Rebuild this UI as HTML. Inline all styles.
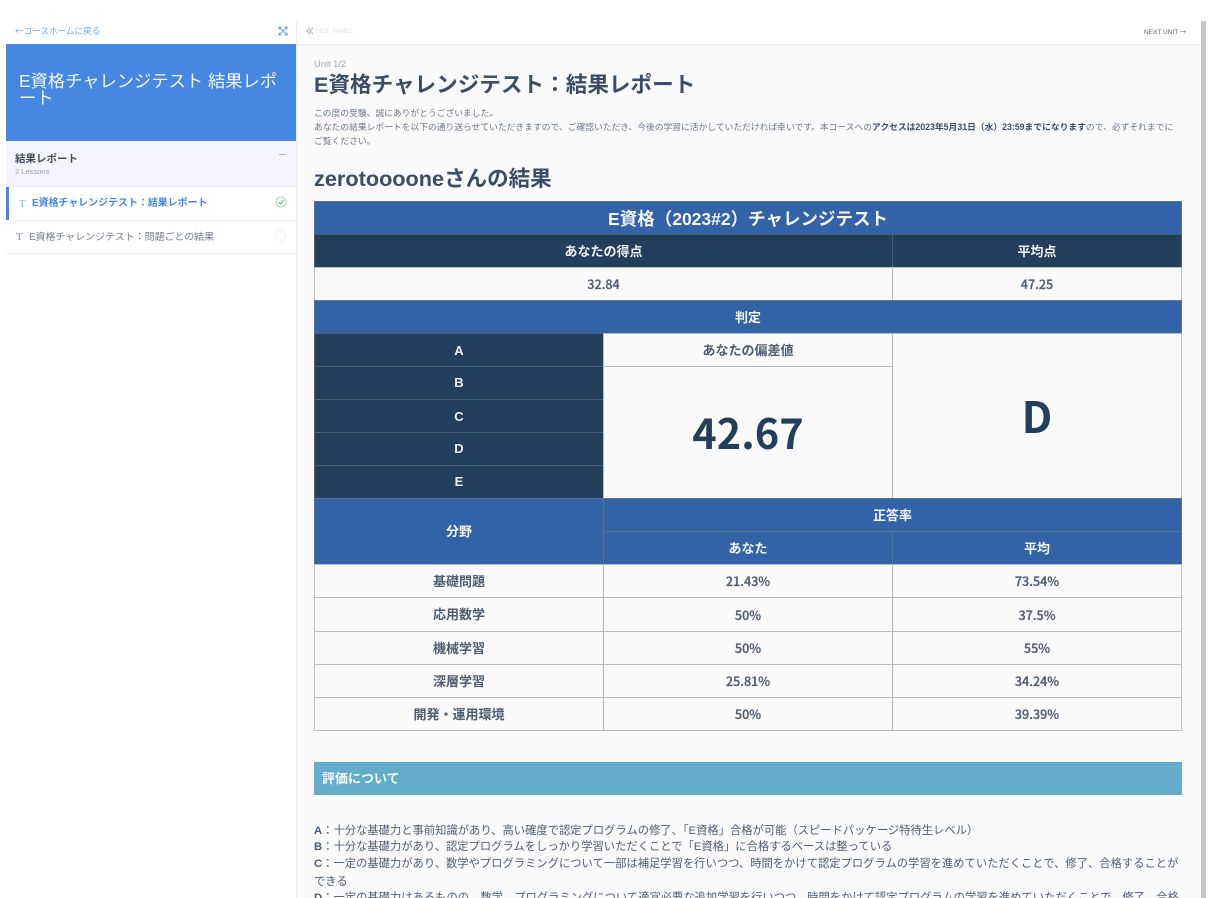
<!DOCTYPE html>
<html lang="ja">
<head>
<meta charset="utf-8">
<title>E資格チャレンジテスト：結果レポート</title>
<style>
html,body{margin:0;padding:0;width:1208px;height:898px;overflow:hidden;background:#fff;}
body{font-family:"Liberation Sans","Noto Sans CJK JP",sans-serif;position:relative;color:#3d4d65;}
.a{position:absolute;white-space:nowrap;}
.c{position:absolute;box-sizing:border-box;display:flex;align-items:center;justify-content:center;white-space:nowrap;font-weight:700;font-size:13px;border:1px solid #b9bcc0;margin:0;}
.j{padding-bottom:2px;}
.b{background:#3163a6;color:#f4f6fa;border-color:#5a7391;}
.d{background:#233f5c;color:#eef0f3;border-color:#4a5f74;}
.w{background:#fafafa;color:#4f5d73;}
.n{font-family:"Noto Sans CJK JP","Liberation Sans",sans-serif;font-weight:500;font-size:12.6px;padding-bottom:1px;-webkit-text-stroke:.25px #4f5d73;}
.big{font-family:"Noto Sans CJK JP","Liberation Sans",sans-serif;font-weight:700;color:#233f5c;}
</style>
</head>
<body>
<!-- sidebar -->
<div class="a" style="left:6px;top:21px;width:290px;height:877px;background:#fff;"></div>
<div class="a" style="left:15px;top:25px;font-family:'Noto Sans CJK JP',sans-serif;font-size:8.6px;line-height:13px;color:#6fa6e8;">←コースホームに戻る</div>
<svg class="a" style="left:278px;top:26px" width="10" height="10" viewBox="0 0 10 10" fill="none" stroke="#5f9fe6" stroke-width="1"><path d="M1 1L9 9M9 1L1 9M1 3.5V1H3.5M6.5 1H9V3.5M1 6.5V9H3.5M6.5 9H9V6.5"/></svg>
<div class="a" style="left:6px;top:44px;width:290px;height:97px;background:#4687e1;"></div>
<div class="a" style="left:19px;top:73px;font-size:17.3px;line-height:17px;color:#f3f7fd;">E資格チャレンジテスト 結果レポ<br>ート</div>
<div class="a" style="left:6px;top:141px;width:290px;height:46px;background:#f4f5fc;border-bottom:1px solid #e8e9ee;box-sizing:border-box;"></div>
<div class="a" style="left:15px;top:152px;font-size:10.5px;line-height:15px;font-weight:700;color:#454f5f;">結果レポート</div>
<div class="a" style="left:15px;top:166px;font-size:7.5px;line-height:12px;color:#9a9fa9;">2 Lessons</div>
<div class="a" style="left:279px;top:154px;width:7px;height:1px;background:#b5b8c0;"></div>
<div class="a" style="left:6px;top:187px;width:3px;height:33px;background:#4687e1;"></div>
<div class="a" style="left:19px;top:197px;font-size:11px;line-height:14px;color:#8fb4e6;font-family:'Liberation Serif',serif;">T</div>
<div class="a" style="left:32px;top:196.5px;font-size:9.95px;line-height:14px;font-weight:700;color:#4687e1;">E資格チャレンジテスト：結果レポート</div>
<svg class="a" style="left:275px;top:196px" width="12" height="12" viewBox="0 0 12 12" fill="none"><circle cx="6" cy="6" r="5" stroke="#9be0b0"/><path d="M3.6 6.2L5.4 8L8.6 3.8" stroke="#56b878" stroke-width="1"/></svg>
<div class="a" style="left:6px;top:220px;width:290px;height:1px;background:#f0f0f3;"></div>
<div class="a" style="left:16px;top:230px;font-size:11px;line-height:14px;color:#8b919b;font-family:'Liberation Serif',serif;">T</div>
<div class="a" style="left:29px;top:230.5px;font-size:9.93px;line-height:14px;color:#757c88;">E資格チャレンジテスト：問題ごとの結果</div>
<div class="a" style="left:275px;top:230px;width:11px;height:11px;border:1px solid #f0f0f2;border-radius:50%;box-sizing:border-box;"></div>
<div class="a" style="left:6px;top:253px;width:290px;height:1px;background:#eeeef1;"></div>
<div class="a" style="left:296px;top:21px;width:1px;height:877px;background:#ececef;"></div>

<!-- top bar -->
<div class="a" style="left:297px;top:44px;width:903px;height:854px;background:#fafafa;"></div>
<div class="a" style="left:297px;top:44px;width:903px;height:2px;background:#f1f1f3;"></div>
<svg class="a" style="left:306px;top:27px" width="8" height="8" viewBox="0 0 8 8" fill="none" stroke="#aab0ba" stroke-width="1"><path d="M4 1L1 4L4 7M7 1L4 4L7 7"/></svg>
<div class="a" style="left:315px;top:26px;font-size:6.5px;line-height:11px;color:#dde0e5;">HIDE PANEL</div>
<div class="a" style="left:1144px;top:26px;font-size:6.5px;line-height:11px;color:#5c6470;">NEXT UNIT <span style="font-family:'Noto Sans CJK JP',sans-serif;">→</span></div>
<div class="a" style="left:1201px;top:21px;width:5px;height:877px;background:#c6c6c6;"></div>

<!-- heading -->
<div class="a" style="left:314px;top:58px;font-size:9.3px;line-height:12px;color:#a3a9b4;">Unit 1/2</div>
<div class="a" style="left:314px;top:69.5px;font-size:21.6px;line-height:29px;font-weight:700;color:#3d4d65;">E資格チャレンジテスト：結果レポート</div>
<div class="a" style="left:314px;top:107px;font-size:8.78px;line-height:13px;color:#6d7888;">この度の受験、誠にありがとうございました。</div>
<div class="a" style="left:314px;top:121px;font-size:8.78px;line-height:13px;color:#6d7888;">あなたの結果レポートを以下の通り送らせていただきますので、ご確認いただき、今後の学習に活かしていただければ幸いです。本コースへの<b style="color:#3d4d65">アクセスは2023年5月31日（水）23:59までになります</b>ので、必ずそれまでに</div>
<div class="a" style="left:314px;top:135px;font-size:8.78px;line-height:13px;color:#6d7888;">ご覧ください。</div>
<div class="a" style="left:314px;top:163px;font-size:21.7px;line-height:32px;font-weight:700;color:#3d4d65;">zerotoooone<span style="font-size:21.5px">さんの結果</span></div>

<!-- table -->
<div class="c b" style="left:314px;top:201px;width:868px;height:34px;font-size:17.5px;">E資格（2023#2）チャレンジテスト</div>
<div class="c d j" style="left:314px;top:234px;width:579px;height:34px;">あなたの得点</div>
<div class="c d j" style="left:892px;top:234px;width:290px;height:34px;">平均点</div>
<div class="c w n" style="left:314px;top:267px;width:579px;height:34px;">32.84</div>
<div class="c w n" style="left:892px;top:267px;width:290px;height:34px;">47.25</div>
<div class="c b j" style="left:314px;top:300px;width:868px;height:34px;">判定</div>

<div class="c d" style="left:314px;top:333px;width:290px;height:34px;">A</div>
<div class="c d j" style="left:314px;top:366px;width:290px;height:34px;">B</div>
<div class="c d" style="left:314px;top:399px;width:290px;height:34px;">C</div>
<div class="c d j" style="left:314px;top:432px;width:290px;height:34px;">D</div>
<div class="c d j" style="left:314px;top:465px;width:290px;height:34px;">E</div>
<div class="c w j" style="left:603px;top:333px;width:290px;height:34px;">あなたの偏差値</div>
<div class="c w big" style="left:603px;top:366px;width:290px;height:133px;font-size:41.5px;padding-bottom:4px;">42.67</div>
<div class="c w big" style="left:892px;top:333px;width:290px;height:166px;font-size:43px;padding-bottom:2px;">D</div>

<div class="c b j" style="left:314px;top:498px;width:290px;height:67px;">分野</div>
<div class="c b j" style="left:603px;top:498px;width:579px;height:34px;">正答率</div>
<div class="c b j" style="left:603px;top:531px;width:290px;height:34px;">あなた</div>
<div class="c b j" style="left:892px;top:531px;width:290px;height:34px;">平均</div>

<div class="c w j" style="left:314px;top:564px;width:290px;height:34px;">基礎問題</div>
<div class="c w n" style="left:603px;top:564px;width:290px;height:34px;">21.43%</div>
<div class="c w n" style="left:892px;top:564px;width:290px;height:34px;">73.54%</div>
<div class="c w j" style="left:314px;top:597px;width:290px;height:35px;">応用数学</div>
<div class="c w n" style="left:603px;top:597px;width:290px;height:35px;">50%</div>
<div class="c w n" style="left:892px;top:597px;width:290px;height:35px;">37.5%</div>
<div class="c w j" style="left:314px;top:631px;width:290px;height:34px;">機械学習</div>
<div class="c w n" style="left:603px;top:631px;width:290px;height:34px;">50%</div>
<div class="c w n" style="left:892px;top:631px;width:290px;height:34px;">55%</div>
<div class="c w j" style="left:314px;top:664px;width:290px;height:34px;">深層学習</div>
<div class="c w n" style="left:603px;top:664px;width:290px;height:34px;">25.81%</div>
<div class="c w n" style="left:892px;top:664px;width:290px;height:34px;">34.24%</div>
<div class="c w j" style="left:314px;top:697px;width:290px;height:34px;">開発・運用環境</div>
<div class="c w n" style="left:603px;top:697px;width:290px;height:34px;">50%</div>
<div class="c w n" style="left:892px;top:697px;width:290px;height:34px;">39.39%</div>

<!-- evaluation -->
<div class="a" style="left:314px;top:762px;width:868px;height:33px;background:#63adcb;"></div>
<div class="a" style="left:322px;top:770px;font-size:13px;line-height:17px;font-weight:700;color:#f4f8fb;">評価について</div>
<div class="a" style="left:314px;top:823px;font-size:11.3px;line-height:17px;color:#4f5d73;"><b>A</b>：十分な基礎力と事前知識があり、高い確度で認定プログラムの修了、「E資格」合格が可能（スピードパッケージ特待生レベル）</div>
<div class="a" style="left:314px;top:839px;font-size:11.3px;line-height:17px;color:#4f5d73;"><b>B</b>：十分な基礎力があり、認定プログラムをしっかり学習いただくことで「E資格」に合格するベースは整っている</div>
<div class="a" style="left:314px;top:856px;font-size:11.3px;line-height:17px;color:#4f5d73;"><b>C</b>：一定の基礎力があり、数学やプログラミングについて一部は補足学習を行いつつ、時間をかけて認定プログラムの学習を進めていただくことで、修了、合格することが</div>
<div class="a" style="left:314px;top:874px;font-size:11.3px;line-height:17px;color:#4f5d73;">できる</div>
<div class="a" style="left:314px;top:890px;font-size:11.3px;line-height:17px;color:#4f5d73;"><b>D</b>：一定の基礎力はあるものの、数学、プログラミングについて適宜必要な追加学習を行いつつ、時間をかけて認定プログラムの学習を進めていただくことで、修了、合格</div>
</body>
</html>
